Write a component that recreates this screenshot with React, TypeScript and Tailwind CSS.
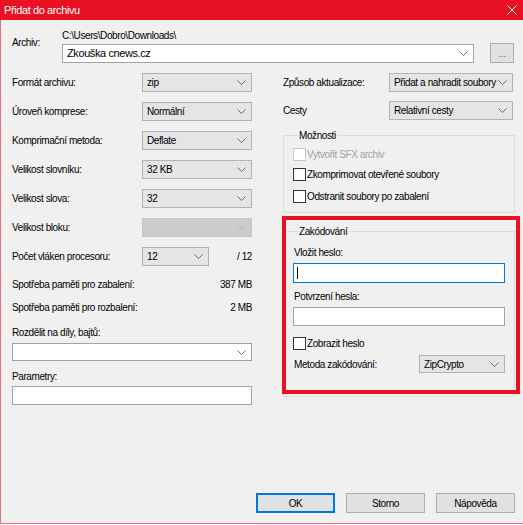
import type { ReactNode } from "react";

function Chevron({ disabled }: { disabled?: boolean }) {
  return (
    <svg width="9" height="5" viewBox="0 0 9 5" className="shrink-0">
      <path
        d="M0.5 0.5 L4.5 4.5 L8.5 0.5"
        fill="none"
        stroke={disabled ? "#b4b4b4" : "#6a6a6a"}
        strokeWidth="1"
      />
    </svg>
  );
}

function Combo({
  value,
  className = "",
  disabled,
  white,
}: {
  value?: string;
  className?: string;
  disabled?: boolean;
  white?: boolean;
}) {
  const skin = disabled
    ? "border-[#c6c6c6] bg-[#cccccc]"
    : white
      ? "border-[#a3a3a3] bg-white"
      : "border-[#b3b3b3] bg-[#e5e5e5]";
  return (
    <div className={`flex items-center justify-between border pl-[4px] pr-[5px] ${skin} ${className}`}>
      <span>{value}</span>
      <Chevron disabled={disabled} />
    </div>
  );
}

function Check({ label, disabled }: { label: string; disabled?: boolean }) {
  return (
    <div className="flex items-center">
      <span
        className={`h-[13px] w-[13px] border bg-white ${disabled ? "border-[#c8c8c8]" : "border-[#333333]"}`}
      />
      <span className={`ml-[1px] ${disabled ? "text-[#a0a0a0]" : ""}`}>{label}</span>
    </div>
  );
}

function Row({ label, children }: { label: string; children: ReactNode }) {
  return (
    <div className="flex h-[29px] items-center">
      <span className="flex-1">{label}</span>
      {children}
    </div>
  );
}

function Btn({ label, primary }: { label: string; primary?: boolean }) {
  return (
    <div
      className={`flex h-[20px] w-[79px] items-center justify-center border bg-[#e1e1e1] ${
        primary ? "border-[#0078d7] shadow-[inset_0_0_0_1px_#0078d7]" : "border-[#adadad]"
      }`}
    >
      {label}
    </div>
  );
}

export default function App() {
  return (
    <div className="flex h-[524px] w-[523px] flex-col bg-[#f0f0f0] font-['Liberation_Sans',Arial,sans-serif] text-[10px] leading-[13px] tracking-[-0.4px] text-black">
      {/* title bar */}
      <div className="flex h-[20px] shrink-0 items-center justify-between bg-[#e81123] pl-[4px] pr-[6px] text-[11px] text-white">
        <span>Přidat do archivu</span>
        <svg width="10" height="10" viewBox="0 0 10 10">
          <path d="M0.5 0.5 L9.5 9.5 M9.5 0.5 L0.5 9.5" stroke="#ffffff" strokeWidth="1" />
        </svg>
      </div>

      <div className="flex flex-1 flex-col border-b border-l border-[#ec6f7c]">
        {/* archive */}
        <div className="mt-[9px] flex">
          <span className="w-[61px] pl-[11px] pt-[7px]">Archiv:</span>
          <div className="flex flex-col">
            <span className="h-[13px]">C:\Users\Dobro\Downloads\</span>
            <Combo white value="Zkouška cnews.cz" className="mt-[2px] h-[19px] w-[412px] text-[11px]" />
          </div>
          <div className="ml-[16px] mt-[14px] flex h-[20px] w-[24px] items-center justify-center border border-[#adadad] bg-[#e1e1e1] text-[#707070]">
            ...
          </div>
        </div>

        <div className="mt-[5px] flex pl-[11px]">
          {/* left column */}
          <div className="flex w-[240px] flex-col">
            <Row label="Formát archivu:">
              <Combo value="zip" className="h-[19px] w-[110px]" />
            </Row>
            <Row label="Úroveň komprese:">
              <Combo value="Normální" className="h-[19px] w-[110px]" />
            </Row>
            <Row label="Komprimační metoda:">
              <Combo value="Deflate" className="h-[19px] w-[110px]" />
            </Row>
            <Row label="Velikost slovníku:">
              <Combo value="32 KB" className="h-[19px] w-[110px]" />
            </Row>
            <Row label="Velikost slova:">
              <Combo value="32" className="h-[19px] w-[110px]" />
            </Row>
            <Row label="Velikost bloku:">
              <Combo disabled className="h-[19px] w-[110px]" />
            </Row>
            <div className="flex h-[29px] items-center">
              <span className="w-[130px]">Počet vláken procesoru:</span>
              <Combo value="12" className="h-[19px] w-[67px]" />
              <span className="ml-auto">/ 12</span>
            </div>
            <div className="mt-[2px] flex h-[23px] items-center justify-between">
              <span>Spotřeba paměti pro zabalení:</span>
              <span>387 MB</span>
            </div>
            <div className="flex h-[23px] items-center justify-between">
              <span>Spotřeba paměti pro rozbalení:</span>
              <span>2 MB</span>
            </div>
            <span className="mt-[7px]">Rozdělit na díly, bajtů:</span>
            <Combo white className="mt-[4px] h-[18px] w-[240px]" />
            <span className="mt-[9px]">Parametry:</span>
            <div className="mt-[3px] h-[19px] w-[240px] border border-[#a3a3a3] bg-white" />
          </div>

          {/* right column */}
          <div className="ml-[31px] flex w-[232px] flex-col">
            <div className="flex h-[29px] items-center">
              <span className="w-[106px]">Způsob aktualizace:</span>
              <Combo value="Přidat a nahradit soubory" className="h-[19px] w-[124px]" />
            </div>
            <div className="flex h-[27px] items-center">
              <span className="w-[106px]">Cesty</span>
              <Combo value="Relativní cesty" className="h-[19px] w-[124px]" />
            </div>

            <fieldset className="mt-[5px] border border-[#dcdcdc] pb-[5px] pl-[9px]">
              <legend className="ml-[5px] px-[1px]">Možnosti</legend>
              <div className="flex h-[22px] items-center pt-[2px]">
                <Check disabled label="Vytvořit SFX archiv" />
              </div>
              <div className="flex h-[21px] items-center">
                <Check label="Zkomprimovat otevřené soubory" />
              </div>
              <div className="flex h-[22px] items-center">
                <Check label="Odstranit soubory po zabalení" />
              </div>
            </fieldset>

            <div className="relative mt-[12px]">
              <fieldset className="flex flex-col border border-[#dcdcdc] pb-[23px] pl-[9px]">
                <legend className="ml-[5px] px-[1px]">Zakódování</legend>
                <span className="mt-[8px] pl-[1px]">Vložit heslo:</span>
                <div className="mt-[4px] flex h-[20px] w-[212px] items-center border border-[#0078d7] bg-white pl-[3px]">
                  <span className="h-[12px] w-[1px] bg-black" />
                </div>
                <span className="mt-[7px] pl-[1px]">Potvrzení hesla:</span>
                <div className="mt-[4px] h-[19px] w-[212px] border border-[#a3a3a3] bg-white" />
                <div className="mt-[11px] flex h-[13px] items-center">
                  <Check label="Zobrazit heslo" />
                </div>
                <div className="mt-[5px] flex h-[18px] items-center">
                  <span className="w-[126px] pl-[1px]">Metoda zakódování:</span>
                  <Combo value="ZipCrypto" className="h-[18px] w-[86px]" />
                </div>
              </fieldset>
              <div className="absolute left-[-1px] top-[-9px] h-[178px] w-[238px] border-4 border-[#e81123]" />
            </div>
          </div>
        </div>

        <div className="flex-1" />
        <div className="flex justify-end gap-[11px] pb-[10px] pr-[8px]">
          <Btn primary label="OK" />
          <Btn label="Storno" />
          <Btn label="Nápověda" />
        </div>
      </div>
    </div>
  );
}
